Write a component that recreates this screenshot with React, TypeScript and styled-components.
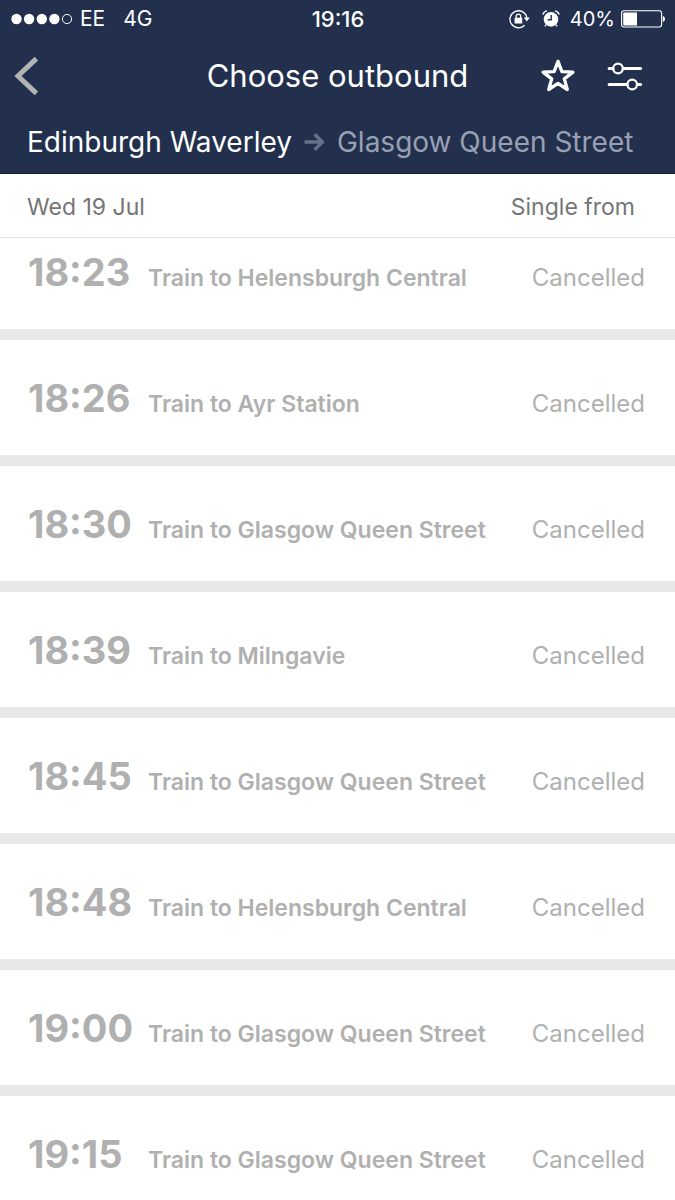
import React from "react";
import styled, { createGlobalStyle } from "styled-components";

const GlobalStyle = createGlobalStyle`
  *, *::before, *::after { box-sizing: border-box; }
  body {
    margin: 0;
    background: #fff;
    font-family: Inter, "Liberation Sans", sans-serif;
  }
`;

const Screen = styled.div`
  display: flex;
  flex-direction: column;
  height: 100vh;
  overflow: hidden;
`;

const Header = styled.header`
  flex: none;
  padding-bottom: 5px;
  background: #22304d;
  border-bottom: 1px solid #141d33;
  color: #fff;
`;

const StatusBar = styled.div`
  display: grid;
  grid-template-columns: 1fr auto 1fr;
  align-items: center;
  height: 36px;
  padding: 2px 10px 0 11px;
  line-height: 24px;
`;

const StatusGroup = styled.div<{ $end?: boolean }>`
  display: flex;
  align-items: center;
  justify-content: ${(p) => (p.$end ? "flex-end" : "flex-start")};
  gap: ${(p) => (p.$end ? "6px" : "8px")};
  font-size: ${(p) => (p.$end ? "20px" : "21px")};
`;

const Network = styled.span`
  margin-left: 10px;
`;

const Clock = styled.time`
  font-size: 22px;
  font-weight: 500;
`;

const AlarmSlot = styled.span`
  display: flex;
  margin: 0 4px 0 6px;
`;

const NavBar = styled.nav`
  display: grid;
  grid-template-columns: 1fr auto 1fr;
  align-items: center;
  height: 80px;
  padding: 0 32px 0 14px;
`;

const Title = styled.h1`
  margin: 0;
  padding-left: 18px;
  font-size: 31px;
  font-weight: 400;
  line-height: 40px;
`;

const Actions = styled.div`
  display: flex;
  justify-content: flex-end;
  gap: 31px;
`;

const IconButton = styled.button`
  display: flex;
  justify-self: start;
  padding: 0;
  border: 0;
  background: none;
  color: inherit;
  cursor: pointer;
`;

const Route = styled.div`
  display: flex;
  align-items: center;
  gap: 12px;
  height: 52px;
  padding: 0 28px 0 27px;
  font-size: 28px;
  line-height: 36px;
  white-space: nowrap;
`;

const Destination = styled.span`
  color: #98a1b3;
`;

const SubHeader = styled.div`
  display: flex;
  flex: none;
  align-items: center;
  justify-content: space-between;
  padding: 17px 40px 14px 27px;
  border-bottom: 1px solid #e2e2e2;
  color: #757575;
  font-size: 23px;
  line-height: 32px;
`;

const ListViewport = styled.main`
  flex: 1;
  min-height: 0;
  overflow-y: auto;
  scrollbar-width: none;
`;

const TrainList = styled.ul`
  margin: -24px 0 0;
  padding: 0;
  list-style: none;
`;

const TrainRow = styled.li`
  display: flex;
  align-items: baseline;
  padding: 34px 30px 33px 28px;
  border-bottom: 11px solid #e8e8e8;
  color: #b0b0b0;
  font-size: 24px;
  line-height: 32px;
  white-space: nowrap;
`;

const Departure = styled.time`
  flex: none;
  width: 120px;
  font-size: 38px;
  font-weight: 700;
  line-height: 48px;
`;

const Service = styled.span`
  flex: 1;
  font-size: 23px;
  font-weight: 600;
`;

const trains = [
  ["18:23", "Helensburgh Central"],
  ["18:26", "Ayr Station"],
  ["18:30", "Glasgow Queen Street"],
  ["18:39", "Milngavie"],
  ["18:45", "Glasgow Queen Street"],
  ["18:48", "Helensburgh Central"],
  ["19:00", "Glasgow Queen Street"],
  ["19:15", "Glasgow Queen Street"],
];

const SignalIcon = () => (
  <svg width="61" height="12" viewBox="0 0 61 12" fill="#fff" aria-label="Signal strength">
    <circle cx="5.5" cy="6" r="5.2" />
    <circle cx="18.1" cy="6" r="5.2" />
    <circle cx="30.8" cy="6" r="5.2" />
    <circle cx="43.4" cy="6" r="5.2" />
    <circle cx="56" cy="6" r="4.6" fill="none" stroke="#fff" />
  </svg>
);

const RotationLockIcon = () => (
  <svg width="21" height="20" viewBox="0 0 21 20" fill="none" stroke="#fff" aria-label="Rotation lock">
    <path d="M15.6 16.2A8.5 8.5 0 1 1 17.9 9" strokeWidth="1.3" />
    <path d="M14.8 8.6h6L17.8 12.4z" fill="#fff" stroke="none" />
    <rect x="5.6" y="8.8" width="7.6" height="5.8" rx=".6" fill="#fff" stroke="none" />
    <path d="M7.1 9V7.4a2.3 2.3 0 0 1 4.6 0V9" strokeWidth="1.3" />
  </svg>
);

const AlarmIcon = () => (
  <svg width="18" height="18" viewBox="0 0 18 18" fill="none" aria-label="Alarm">
    <circle cx="9" cy="9.4" r="7.3" fill="#fff" />
    <path d="M9.2 5v4.8H5.6" stroke="#22304d" strokeWidth="1.4" />
    <path d="M.9 4.6Q1.7 1.5 5 .9M17.1 4.6Q16.3 1.5 13 .9" stroke="#fff" strokeWidth="1.4" />
    <path d="M4 14.8l-1.2 1.6M14 14.8l1.2 1.6" stroke="#fff" strokeWidth="1.4" />
  </svg>
);

const BatteryIcon = () => (
  <svg width="44" height="18" viewBox="0 0 44 18" fill="none" aria-label="Battery">
    <rect x=".6" y=".8" width="40" height="16.2" rx="2.4" stroke="#fff" strokeWidth="1.1" />
    <path d="M2.2 3.6a1.2 1.2 0 0 1 1.2-1.2H16v13H3.4a1.2 1.2 0 0 1-1.2-1.2z" fill="#fff" />
    <path d="M41.8 5.8q2.2.8 2.2 3.1t-2.2 3.1z" fill="#fff" />
  </svg>
);

const BackIcon = () => (
  <svg width="26" height="40" viewBox="0 0 26 40" fill="none">
    <path d="M22.4 2.6L4 20l18.4 17.4" stroke="#b3b3b3" strokeWidth="5" />
  </svg>
);

const StarIcon = () => (
  <svg width="36" height="36" viewBox="0 0 36 36" fill="none">
    <path
      d="M18 3.4l3.9 10.2 11 .5-8.6 6.8 3 10.6L18 25.4l-9.3 6.1 3-10.6-8.6-6.8 11-.5z"
      stroke="#fff"
      strokeWidth="3.3"
      strokeLinejoin="round"
    />
  </svg>
);

const FilterIcon = () => (
  <svg width="36" height="36" viewBox="0 0 36 36" fill="none" stroke="#fff" strokeLinecap="round">
    <path d="M2.2 10.5H6M17 10.5h16.5M2.2 26.5H20M31 26.5h2.5" strokeWidth="3.2" />
    <circle cx="11" cy="10.5" r="4.8" strokeWidth="2.2" />
    <circle cx="25.2" cy="26.5" r="4.8" strokeWidth="2.2" />
  </svg>
);

const ArrowIcon = () => (
  <svg width="21" height="20" viewBox="0 0 21 20" fill="none">
    <path d="M.6 10h17.4M10.6 2.2l7.8 7.8-7.8 7.8" stroke="#65708a" strokeWidth="3.4" />
  </svg>
);

export default function App() {
  return (
    <>
      <GlobalStyle />
      <Screen>
        <Header>
          <StatusBar>
            <StatusGroup>
              <SignalIcon />
              <span>EE</span>
              <Network>4G</Network>
            </StatusGroup>
            <Clock>19:16</Clock>
            <StatusGroup $end>
              <RotationLockIcon />
              <AlarmSlot>
                <AlarmIcon />
              </AlarmSlot>
              <span>40%</span>
              <BatteryIcon />
            </StatusGroup>
          </StatusBar>
          <NavBar>
            <IconButton type="button" aria-label="Back">
              <BackIcon />
            </IconButton>
            <Title>Choose outbound</Title>
            <Actions>
              <IconButton type="button" aria-label="Favourite">
                <StarIcon />
              </IconButton>
              <IconButton type="button" aria-label="Filter">
                <FilterIcon />
              </IconButton>
            </Actions>
          </NavBar>
          <Route>
            <span>Edinburgh Waverley</span>
            <ArrowIcon />
            <Destination>Glasgow Queen Street</Destination>
          </Route>
        </Header>
        <SubHeader>
          <span>Wed 19 Jul</span>
          <span>Single from</span>
        </SubHeader>
        <ListViewport>
          <TrainList>
            {trains.map(([time, destination]) => (
              <TrainRow key={time}>
                <Departure>{time}</Departure>
                <Service>Train to {destination}</Service>
                <span>Cancelled</span>
              </TrainRow>
            ))}
          </TrainList>
        </ListViewport>
      </Screen>
    </>
  );
}
